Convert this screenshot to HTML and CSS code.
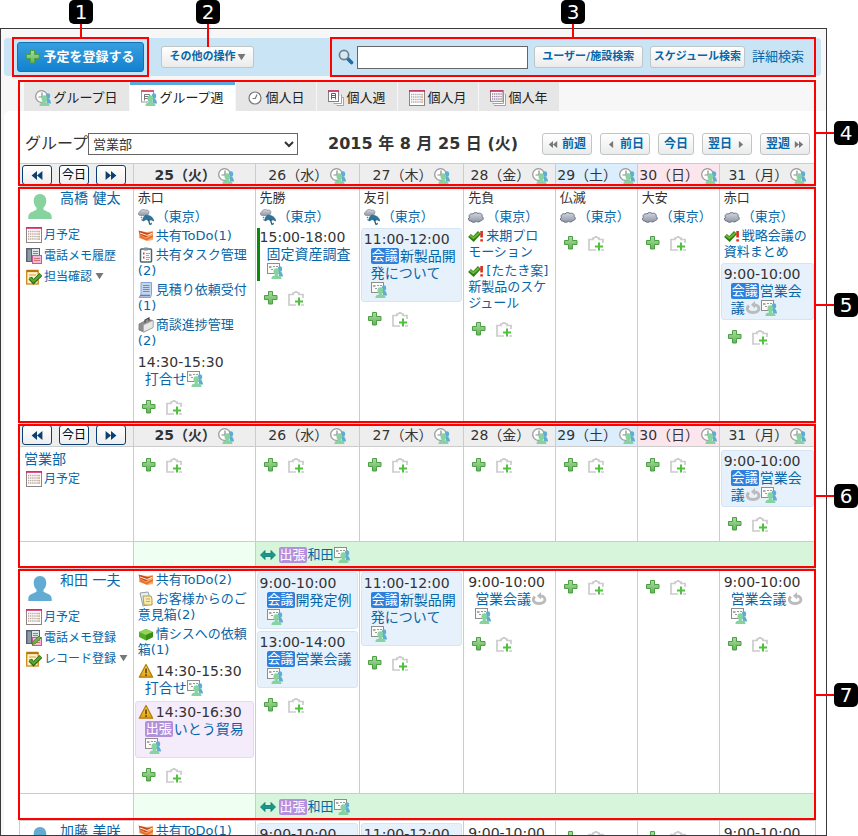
FILE: index.html
```html
<!DOCTYPE html>
<html lang="ja">
<head>
<meta charset="utf-8">
<title>スケジュール</title>
<link rel="stylesheet" href="styles.css">
</head>
<body>
<svg class="sprite" aria-hidden="true">
  <defs>
    <linearGradient id="gp" x1="0" y1="0" x2="0" y2="1"><stop offset="0" stop-color="#a9dc9f"/><stop offset="1" stop-color="#63b558"/></linearGradient>
    <linearGradient id="gc" x1="0" y1="0" x2="0" y2="1"><stop offset="0" stop-color="#d3d7e0"/><stop offset="1" stop-color="#8e95a5"/></linearGradient>
    <linearGradient id="gw" x1="0" y1="0" x2="0" y2="1"><stop offset="0" stop-color="#ffdf5a"/><stop offset="1" stop-color="#e0a010"/></linearGradient>
    <symbol id="people" viewBox="0 0 16 16"><ellipse cx="13" cy="6" rx="2.200" ry="2.800" fill="#5fadd3"/><path d="M11.500 8.500h2.800c.2 1.800 1.700 2 1.700 5h-4z" fill="#5fadd3"/><ellipse cx="9.300" cy="8.500" rx="2.800" ry="3.200" fill="#86d3a0"/><path d="M7.800 10.500h3v2c1.800.4 3.700.5 3.700 3.500H4.500c0-3 1.700-3.100 3.300-3.500z" fill="#86d3a0"/></symbol>
    <symbol id="clockppl" viewBox="0 0 16 16"><circle cx="6.500" cy="6.500" r="5.800" fill="#fff" stroke="#999" stroke-width="1.300"/><path d="M7 2.500v4.500H3.500" fill="none" stroke="#888" stroke-width="1.200"/><use href="#people"/></symbol>
    <symbol id="memoppl" viewBox="0 0 16 16"><rect x=".5" y=".5" width="12" height="10" fill="#fbfbf7" stroke="#8d8d8d"/><path d="M2 3h2.500v2H2z" fill="#aaa"/><path d="M6 3.500h2M9 3.500h2M4 6.500h2" stroke="#999"/><use href="#people"/></symbol>
    <symbol id="calppl" viewBox="0 0 16 16"><rect x=".5" y="1" width="12" height="11" fill="#fff" stroke="#999"/><path d="M0 1h13" stroke="#e0566c" stroke-width="2"/><path d="M3.500 10.500V4.500h5v5.500M3.500 6.500h5M3.500 8.500h5" fill="none" stroke="#777"/><use href="#people"/></symbol>
    <symbol id="clock" viewBox="0 0 16 16"><circle cx="8" cy="8" r="6" fill="#fff" stroke="#777" stroke-width="1.200"/><path d="M10 4.500L8.300 8.500H5.500" fill="none" stroke="#777" stroke-width="1.200"/></symbol>
    <symbol id="weeks" viewBox="0 0 16 16"><path d="M8.500 15.500h7V7.500H13M5.500 13.500h8V4.500" fill="#fff" stroke="#aaa099"/><rect x=".5" y="1" width="10" height="10.500" fill="#fff" stroke="#8a7d7d"/><path d="M0 1h11" stroke="#d81b60" stroke-width="1.500"/><path d="M3.500 9.500V3.500h4v6M3.500 5.500h4M3.500 7.500h4" fill="none" stroke="#6d5c66"/></symbol>
    <symbol id="cal" viewBox="0 0 16 16"><rect x=".5" y=".5" width="15" height="15" fill="#fff" stroke="#8d8583"/><path d="M0 1h16" stroke="#d81b60" stroke-width="1.500"/><path d="M2 4.500h12M2 7h12M2 9.500h12M2 12h12" stroke="#b5a49d" stroke-width="1.400" stroke-dasharray="1.300 .8"/><path d="M13 4v9" stroke="#ea9a70" stroke-dasharray="1.400 1.200"/></symbol>
    <symbol id="years" viewBox="0 0 16 16"><path d="M4 15.500h11.500V4M2.500 13.500h11V2" fill="#fff" stroke="#aaa099"/><rect x=".5" y=".8" width="12.500" height="10.500" fill="#fff" stroke="#8d8583"/><path d="M0 1h13.500" stroke="#d81b60" stroke-width="1.500"/><path d="M2 4h10M2 6.500h10M2 9h10" stroke="#98809c" stroke-width="1.400" stroke-dasharray="1.300 .8"/></symbol>
    <symbol id="plus" viewBox="0 0 14 14"><path d="M4.500 .5h4v4h4.500v4H8.500v4.500h-4V8.500H.5v-4h4z" fill="url(#gp)" stroke="#4c9f45"/></symbol>
    <symbol id="clip" viewBox="0 0 16 16"><path d="M8 14H1V3.500H5V2h1l2-1.500L10 2h1v1.500h4V7M13 14h3" fill="none" stroke="#ccc" stroke-width="1.700"/><path d="M11 6.500v8M7 10.500h8" stroke="#4fc13c" stroke-width="2"/></symbol>
    <symbol id="user" viewBox="0 0 24 27"><path d="M12 1c4 0 6.300 2.900 6.300 7 0 3-1.300 5.300-2.800 6.500v2.200c2 1.600 8.200 2.200 8.200 7V26H.3v-2.300c0-4.800 6.200-5.400 8.200-7v-2.200C7 13.300 5.700 11 5.700 8c0-4.100 2.300-7 6.300-7z" fill="currentColor"/></symbol>
    <symbol id="phone" viewBox="0 0 16 16"><rect x=".5" y=".5" width="13" height="13" fill="#dfe4e8" stroke="#59656e"/><path d="M1 1h4.500v12.500H1z" fill="#8e9ba5" stroke="#59656e"/><path d="M7 3.500h5M7 5.500h5" stroke="#7d8a94"/><rect x="6.500" y="7.500" width="9" height="8" fill="#f6b8da" stroke="#c05e92"/><path d="M8 10.500h6M8 12.500h6" stroke="#c77"/></symbol>
    <symbol id="phoneedit" viewBox="0 0 16 16"><use href="#phone"/><path d="M6 14.500l1-3L13 6l2 2-6 5.700z" fill="#75b640" stroke="#3d7b24" stroke-width=".8"/></symbol>
    <symbol id="record" viewBox="0 0 16 16"><rect x=".7" y="1.500" width="11.500" height="13.500" fill="#fff2c4" stroke="#c98a1b" stroke-width="1.300"/><path d="M1 2h11" stroke="#b77513" stroke-width="2.200"/><path d="M3 6h7M3 8.500h4M3 11h3" stroke="#c9a05a"/><path d="M4 9l3.500 3.800L15 5.500" fill="none" stroke="#2c6a18" stroke-width="4"/><path d="M4.200 9.300l3.300 3L14.700 5.800" fill="none" stroke="#58ac28" stroke-width="2.200"/></symbol>
    <symbol id="rain" viewBox="0 0 16 16"><path d="M2.500 6.500C-.3 6.500-.3 3.300 1.800 3 2.500.3 6 0 7.200 1.200c2.300-.9 4.300.8 3.600 2.800-.5 2-2 2.500-3 2.500z" fill="url(#gc)" stroke="#858d9b" stroke-width=".8"/><path d="M3 8l1 1M3.500 10.500l1.200 1" stroke="#5b8194" stroke-width="1.200"/><path d="M5 12C4.500 7 8 5.500 10.500 6.500c3 .7 5 3 5.300 5.500l-2.800-1.200-2.500.9-2.200-1.200z" fill="#2d759b" stroke="#1b5878" stroke-width=".6"/><path d="M10.500 10.500l1 4c.4 1.300 2 .9 1.700-.6" fill="none" stroke="#1b5878" stroke-width="1.200"/></symbol>
    <symbol id="cloud" viewBox="0 0 16 16"><path d="M3 12C.5 12.500-.5 9 1.500 8.500 0 6 3 4 5 5c1-2 4-1.600 5-.5 2-1 5 .5 4 3 2 .8 1.500 4-1 4-1 1.500-3.500 2-4.500.8C6.500 13.800 4 13.500 3 12z" fill="url(#gc)" stroke="#676e7c"/></symbol>
    <symbol id="todo" viewBox="0 0 16 16"><path d="M1 3l8 1 6-1v9l-6 1-8-3z" fill="#f8ab6b"/><path d="M.5 2.500l9 2.500 5.500-1-5 4-2 1.500-6-3z" fill="#c9481c"/><path d="M2 7l6 3.500L15 7v2l-6.500 3.500L2 9.500z" fill="#e8702c"/><path d="M2 5l7 2.500 5-2.200" fill="none" stroke="#fff0d8"/></symbol>
    <symbol id="task" viewBox="0 0 16 16"><rect x="2.500" y="2" width="11" height="13" rx="1" fill="#fff" stroke="#4d646c" stroke-width="1.500"/><rect x="5.500" y=".5" width="5" height="3" rx="1" fill="#82949b"/><path d="M5 6.500h1.500M5 10.500h1.500" stroke="#d34" stroke-width="1.800"/><path d="M8 6.500h4M8 8.500h3M8 10.500h4M8 12.500h3" stroke="#9ab"/></symbol>
    <symbol id="sheet" viewBox="0 0 16 16"><path d="M3 .5h10.500v12l-1 3H1l2-3z" fill="#c3d5ef" stroke="#88a3cc"/><path d="M5 3.500h6.500M5 5.500h6.500M5 7.500h6.500M5 9.500h6.500" stroke="#6d8dc0"/><path d="M2 13.500h10" stroke="#5d7fb5" stroke-width="1.500"/></symbol>
    <symbol id="case" viewBox="0 0 16 16"><path d="M1 7l9-4.500 5 1v7L6 15l-5-2z" fill="#8f8f8f" stroke="#777" stroke-width=".8"/><path d="M5.500 8L15 3.500v7L5.500 15z" fill="#e8e8e8" stroke="#a5a5a5" stroke-width=".6"/><path d="M7 5.500V3L11 1v2.500" fill="none" stroke="#444" stroke-width="1.200"/></symbol>
    <symbol id="chk" viewBox="0 0 16 16"><path d="M1.500 7.500L5.500 11l6-6.500" fill="none" stroke="#2f7d16" stroke-width="4.200"/><path d="M2 7.500L5.500 10l5.500-5" fill="none" stroke="#68ba35" stroke-width="2"/><path d="M13.600 3v6.500M13.600 11.200v2.300" stroke="#dd2c1c" stroke-width="2.600"/></symbol>
    <symbol id="warn" viewBox="0 0 16 16"><path d="M8 1.500l6.700 12.700H1.300z" fill="url(#gw)" stroke="#b57b0c" stroke-width="1.300" stroke-linejoin="round"/><path d="M8 5.500v4.700M8 11.300v1.700" stroke="#5b420a" stroke-width="1.600"/></symbol>
    <symbol id="note" viewBox="0 0 16 16"><path d="M2 2l8-1 4 12-9 2z" fill="#e6eef0" stroke="#8da1a6"/><path d="M5 5h8l1 3v6H6z" fill="#f8e9ac" stroke="#b99b4e"/><path d="M8 8h4M8 10.500h4" stroke="#c9a961"/></symbol>
    <symbol id="box" viewBox="0 0 16 16"><path d="M1 6l7-3 7 3v5l-7 3.500L1 11z" fill="#52ae24"/><path d="M1 6l7-3 7 3-7 3z" fill="#91d456"/><path d="M8 9l7-3v5l-7 3.500z" fill="#388e18"/></symbol>
    <symbol id="rep" viewBox="0 0 16 16"><path d="M3.800 5.500C.8 9 2.800 12.500 8 12.500s7-3 5.200-6C12.500 5.500 11.500 5 9.500 5" fill="none" stroke="#bbb" stroke-width="2.800"/><path d="M10 1v7.500L6 4.800z" fill="#bbb"/></symbol>
    <symbol id="span" viewBox="0 0 16 16"><path d="M.5 8L5 3.500V6.500h6v-3L15.500 8 11 12.500v-3H5v3z" fill="#18988a" stroke="#0d776e" stroke-width=".8"/></symbol>
    <symbol id="mag" viewBox="0 0 16 16"><path d="M9.500 9.500l4 4" stroke="#1f6fa5" stroke-width="3.600" stroke-linecap="round"/><circle cx="6" cy="6" r="4.600" fill="#d4e9f2" stroke="#6f7f8c" stroke-width="1.700"/></symbol>
    <symbol id="dl" viewBox="0 0 12 10"><path d="M6 0v10L0 5zM12 0v10L6 5z" fill="currentColor"/></symbol>
    <symbol id="dr" viewBox="0 0 12 10"><path d="M0 0v10l6-5zM6 0v10l6-5z" fill="currentColor"/></symbol>
    <symbol id="sl" viewBox="0 0 12 10"><path d="M9 0v10L3 5z" fill="currentColor"/></symbol>
    <symbol id="sr" viewBox="0 0 12 10"><path d="M3 0v10l6-5z" fill="currentColor"/></symbol>
    <symbol id="down" viewBox="0 0 10 8"><path d="M.5 0h9L5 7z" fill="#777"/></symbol>
  </defs>
</svg>

<main class="frame">
  <div class="toolbar">
    <button class="primary"><svg class="i14"><use href="#plus"/></svg>予定を登録する</button>
    <button class="btn more">その他の操作<svg class="down"><use href="#down"/></svg></button>
    <form class="search">
      <svg class="i16"><use href="#mag"/></svg>
      <input type="text" aria-label="検索">
      <button type="button" class="btn">ユーザー/施設検索</button>
      <button type="button" class="btn">スケジュール検索</button>
      <a href="#">詳細検索</a>
    </form>
  </div>

  <nav class="tabs">
    <a class="tab wide" href="#"><svg class="i16"><use href="#clockppl"/></svg>グループ日</a>
    <a class="tab wide active" href="#"><svg class="i16"><use href="#calppl"/></svg>グループ週</a>
    <a class="tab" href="#"><svg class="i16"><use href="#clock"/></svg>個人日</a>
    <a class="tab" href="#"><svg class="i16"><use href="#weeks"/></svg>個人週</a>
    <a class="tab" href="#"><svg class="i16"><use href="#cal"/></svg>個人月</a>
    <a class="tab" href="#"><svg class="i16"><use href="#years"/></svg>個人年</a>
  </nav>

  <section class="panel">
    <div class="period">
      <label for="group">グループ</label>
      <select id="group"><option>営業部</option></select>
      <h1>2015 年 8 月 25 日 (火)</h1>
      <div class="steps">
        <button class="btn"><svg class="ar"><use href="#dl"/></svg>前週</button>
        <button class="btn"><svg class="ar"><use href="#sl"/></svg>前日</button>
        <button class="btn">今日</button>
        <button class="btn">翌日<svg class="ar"><use href="#sr"/></svg></button>
        <button class="btn">翌週<svg class="ar"><use href="#dr"/></svg></button>
      </div>
    </div>

    <table class="week">
      <colgroup><col class="c-user"><col class="c-today"><col class="c-day"><col class="c-day"><col class="c-fri"><col class="c-end"><col class="c-end"><col class="c-mon"></colgroup>
      <tbody>
        <tr class="head">
          <th><div class="jump"><button aria-label="前週"><svg class="jar"><use href="#dl"/></svg></button><button>今日</button><button aria-label="翌週"><svg class="jar"><use href="#dr"/></svg></button></div></th>
          <th class="today">25（火）<svg class="i16"><use href="#clockppl"/></svg></th>
          <th>26（水）<svg class="i16"><use href="#clockppl"/></svg></th>
          <th>27（木）<svg class="i16"><use href="#clockppl"/></svg></th>
          <th>28（金）<svg class="i16"><use href="#clockppl"/></svg></th>
          <th class="sat">29（土）<svg class="i16"><use href="#clockppl"/></svg></th>
          <th class="sun">30（日）<svg class="i16"><use href="#clockppl"/></svg></th>
          <th>31（月）<svg class="i16"><use href="#clockppl"/></svg></th>
        </tr>
        <tr class="first">
          <td>
            <div class="who"><svg class="avatar green"><use href="#user"/></svg><a href="#">高橋 健太</a></div>
            <ul class="links">
              <li><svg class="i16"><use href="#cal"/></svg><a href="#">月予定</a></li>
              <li><svg class="i16"><use href="#phone"/></svg><a href="#">電話メモ履歴</a></li>
              <li><svg class="i16"><use href="#record"/></svg><a href="#">担当確認</a><svg class="down"><use href="#down"/></svg></li>
            </ul>
          </td>
          <td>
            <div class="luck">赤口</div>
            <div class="weather"><svg class="i16"><use href="#rain"/></svg><a href="#">（東京）</a></div>
            <div class="item"><svg class="i16"><use href="#todo"/></svg><a href="#">共有ToDo(1)</a></div>
            <div class="item"><svg class="i16"><use href="#task"/></svg><a href="#">共有タスク管理<br>(2)</a></div>
            <div class="item"><svg class="i16"><use href="#sheet"/></svg><a href="#">見積り依頼受付<br>(1)</a></div>
            <div class="item"><svg class="i16"><use href="#case"/></svg><a href="#">商談進捗管理<br>(2)</a></div>
            <div class="event"><time>14:30-15:30</time><div class="title"><a href="#">打合せ</a><svg class="i16"><use href="#memoppl"/></svg></div></div>
            <div class="add"><a href="#" aria-label="登録"><svg class="i14"><use href="#plus"/></svg></a><a href="#" aria-label="貼り付け"><svg class="i16"><use href="#clip"/></svg></a></div>
          </td>
          <td>
            <div class="luck">先勝</div>
            <div class="weather"><svg class="i16"><use href="#rain"/></svg><a href="#">（東京）</a></div>
            <div class="event mark"><time>15:00-18:00</time><div class="title"><a href="#">固定資産調査</a><br><svg class="i16"><use href="#memoppl"/></svg></div></div>
            <div class="add"><a href="#" aria-label="登録"><svg class="i14"><use href="#plus"/></svg></a><a href="#" aria-label="貼り付け"><svg class="i16"><use href="#clip"/></svg></a></div>
          </td>
          <td>
            <div class="luck">友引</div>
            <div class="weather"><svg class="i16"><use href="#rain"/></svg><a href="#">（東京）</a></div>
            <div class="event meet"><time>11:00-12:00</time><div class="title"><span class="tag">会議</span><a href="#">新製品開<br>発について</a><br><svg class="i16"><use href="#memoppl"/></svg></div></div>
            <div class="add"><a href="#" aria-label="登録"><svg class="i14"><use href="#plus"/></svg></a><a href="#" aria-label="貼り付け"><svg class="i16"><use href="#clip"/></svg></a></div>
          </td>
          <td>
            <div class="luck">先負</div>
            <div class="weather"><svg class="i16"><use href="#cloud"/></svg><a href="#">（東京）</a></div>
            <div class="item"><svg class="i16"><use href="#chk"/></svg><a href="#">来期プロ<br>モーション</a></div>
            <div class="item"><svg class="i16"><use href="#chk"/></svg><a href="#">[たたき案]<br>新製品のスケ<br>ジュール</a></div>
            <div class="add"><a href="#" aria-label="登録"><svg class="i14"><use href="#plus"/></svg></a><a href="#" aria-label="貼り付け"><svg class="i16"><use href="#clip"/></svg></a></div>
          </td>
          <td>
            <div class="luck">仏滅</div>
            <div class="weather"><svg class="i16"><use href="#cloud"/></svg><a href="#">（東京）</a></div>
            <div class="add"><a href="#" aria-label="登録"><svg class="i14"><use href="#plus"/></svg></a><a href="#" aria-label="貼り付け"><svg class="i16"><use href="#clip"/></svg></a></div>
          </td>
          <td>
            <div class="luck">大安</div>
            <div class="weather"><svg class="i16"><use href="#cloud"/></svg><a href="#">（東京）</a></div>
            <div class="add"><a href="#" aria-label="登録"><svg class="i14"><use href="#plus"/></svg></a><a href="#" aria-label="貼り付け"><svg class="i16"><use href="#clip"/></svg></a></div>
          </td>
          <td>
            <div class="luck">赤口</div>
            <div class="weather"><svg class="i16"><use href="#cloud"/></svg><a href="#">（東京）</a></div>
            <div class="item"><svg class="i16"><use href="#chk"/></svg><a href="#">戦略会議の<br>資料まとめ</a></div>
            <div class="event meet"><time>9:00-10:00</time><div class="title"><span class="tag">会議</span><a href="#">営業会<br>議</a><svg class="i16"><use href="#rep"/></svg><svg class="i16"><use href="#memoppl"/></svg></div></div>
            <div class="add"><a href="#" aria-label="登録"><svg class="i14"><use href="#plus"/></svg></a><a href="#" aria-label="貼り付け"><svg class="i16"><use href="#clip"/></svg></a></div>
          </td>
        </tr>
      </tbody>
      <tbody>
        <tr class="head">
          <th><div class="jump"><button aria-label="前週"><svg class="jar"><use href="#dl"/></svg></button><button>今日</button><button aria-label="翌週"><svg class="jar"><use href="#dr"/></svg></button></div></th>
          <th class="today">25（火）<svg class="i16"><use href="#clockppl"/></svg></th>
          <th>26（水）<svg class="i16"><use href="#clockppl"/></svg></th>
          <th>27（木）<svg class="i16"><use href="#clockppl"/></svg></th>
          <th>28（金）<svg class="i16"><use href="#clockppl"/></svg></th>
          <th class="sat">29（土）<svg class="i16"><use href="#clockppl"/></svg></th>
          <th class="sun">30（日）<svg class="i16"><use href="#clockppl"/></svg></th>
          <th>31（月）<svg class="i16"><use href="#clockppl"/></svg></th>
        </tr>
        <tr class="dept">
          <td>
            <a class="deptname" href="#">営業部</a>
            <ul class="links"><li><svg class="i16"><use href="#cal"/></svg><a href="#">月予定</a></li></ul>
          </td>
          <td><div class="add"><a href="#" aria-label="登録"><svg class="i14"><use href="#plus"/></svg></a><a href="#" aria-label="貼り付け"><svg class="i16"><use href="#clip"/></svg></a></div></td>
          <td><div class="add"><a href="#" aria-label="登録"><svg class="i14"><use href="#plus"/></svg></a><a href="#" aria-label="貼り付け"><svg class="i16"><use href="#clip"/></svg></a></div></td>
          <td><div class="add"><a href="#" aria-label="登録"><svg class="i14"><use href="#plus"/></svg></a><a href="#" aria-label="貼り付け"><svg class="i16"><use href="#clip"/></svg></a></div></td>
          <td><div class="add"><a href="#" aria-label="登録"><svg class="i14"><use href="#plus"/></svg></a><a href="#" aria-label="貼り付け"><svg class="i16"><use href="#clip"/></svg></a></div></td>
          <td><div class="add"><a href="#" aria-label="登録"><svg class="i14"><use href="#plus"/></svg></a><a href="#" aria-label="貼り付け"><svg class="i16"><use href="#clip"/></svg></a></div></td>
          <td><div class="add"><a href="#" aria-label="登録"><svg class="i14"><use href="#plus"/></svg></a><a href="#" aria-label="貼り付け"><svg class="i16"><use href="#clip"/></svg></a></div></td>
          <td>
            <div class="event meet"><time>9:00-10:00</time><div class="title"><span class="tag">会議</span><a href="#">営業会<br>議</a><svg class="i16"><use href="#rep"/></svg><svg class="i16"><use href="#memoppl"/></svg></div></div>
            <div class="add"><a href="#" aria-label="登録"><svg class="i14"><use href="#plus"/></svg></a><a href="#" aria-label="貼り付け"><svg class="i16"><use href="#clip"/></svg></a></div>
          </td>
        </tr>
        <tr class="banner">
          <td></td><td class="pale"></td>
          <td class="trip" colspan="6"><div class="tripline"><svg class="i16"><use href="#span"/></svg><span class="tag out">出張</span><a href="#">和田</a><svg class="i16"><use href="#memoppl"/></svg></div></td>
        </tr>
      </tbody>
      <tbody>
        <tr class="second">
          <td>
            <div class="who"><svg class="avatar blue"><use href="#user"/></svg><a href="#">和田 一夫</a></div>
            <ul class="links">
              <li><svg class="i16"><use href="#cal"/></svg><a href="#">月予定</a></li>
              <li><svg class="i16"><use href="#phoneedit"/></svg><a href="#">電話メモ登録</a></li>
              <li><svg class="i16"><use href="#record"/></svg><a href="#">レコード登録</a><svg class="down"><use href="#down"/></svg></li>
            </ul>
          </td>
          <td>
            <div class="item"><svg class="i16"><use href="#todo"/></svg><a href="#">共有ToDo(2)</a></div>
            <div class="item"><svg class="i16"><use href="#note"/></svg><a href="#">お客様からのご<br>意見箱(2)</a></div>
            <div class="item"><svg class="i16"><use href="#box"/></svg><a href="#">情シスへの依頼<br>箱(1)</a></div>
            <div class="event"><svg class="i16"><use href="#warn"/></svg><time>14:30-15:30</time><div class="title"><a href="#">打合せ</a><svg class="i16"><use href="#memoppl"/></svg></div></div>
            <div class="event away"><svg class="i16"><use href="#warn"/></svg><time>14:30-16:30</time><div class="title"><span class="tag out">出張</span><a href="#">いとう貿易</a><br><svg class="i16"><use href="#memoppl"/></svg></div></div>
            <div class="add"><a href="#" aria-label="登録"><svg class="i14"><use href="#plus"/></svg></a><a href="#" aria-label="貼り付け"><svg class="i16"><use href="#clip"/></svg></a></div>
          </td>
          <td>
            <div class="event meet"><time>9:00-10:00</time><div class="title"><span class="tag">会議</span><a href="#">開発定例</a><br><svg class="i16"><use href="#memoppl"/></svg></div></div>
            <div class="event meet"><time>13:00-14:00</time><div class="title"><span class="tag">会議</span><a href="#">営業会議</a><br><svg class="i16"><use href="#memoppl"/></svg></div></div>
            <div class="add"><a href="#" aria-label="登録"><svg class="i14"><use href="#plus"/></svg></a><a href="#" aria-label="貼り付け"><svg class="i16"><use href="#clip"/></svg></a></div>
          </td>
          <td>
            <div class="event meet"><time>11:00-12:00</time><div class="title"><span class="tag">会議</span><a href="#">新製品開<br>発について</a><br><svg class="i16"><use href="#memoppl"/></svg></div></div>
            <div class="add"><a href="#" aria-label="登録"><svg class="i14"><use href="#plus"/></svg></a><a href="#" aria-label="貼り付け"><svg class="i16"><use href="#clip"/></svg></a></div>
          </td>
          <td>
            <div class="event"><time>9:00-10:00</time><div class="title"><a href="#">営業会議</a><svg class="i16"><use href="#rep"/></svg><br><svg class="i16"><use href="#memoppl"/></svg></div></div>
            <div class="add"><a href="#" aria-label="登録"><svg class="i14"><use href="#plus"/></svg></a><a href="#" aria-label="貼り付け"><svg class="i16"><use href="#clip"/></svg></a></div>
          </td>
          <td><div class="add"><a href="#" aria-label="登録"><svg class="i14"><use href="#plus"/></svg></a><a href="#" aria-label="貼り付け"><svg class="i16"><use href="#clip"/></svg></a></div></td>
          <td><div class="add"><a href="#" aria-label="登録"><svg class="i14"><use href="#plus"/></svg></a><a href="#" aria-label="貼り付け"><svg class="i16"><use href="#clip"/></svg></a></div></td>
          <td>
            <div class="event"><time>9:00-10:00</time><div class="title"><a href="#">営業会議</a><svg class="i16"><use href="#rep"/></svg><br><svg class="i16"><use href="#memoppl"/></svg></div></div>
            <div class="add"><a href="#" aria-label="登録"><svg class="i14"><use href="#plus"/></svg></a><a href="#" aria-label="貼り付け"><svg class="i16"><use href="#clip"/></svg></a></div>
          </td>
        </tr>
        <tr class="banner">
          <td></td><td class="pale"></td>
          <td class="trip" colspan="6"><div class="tripline"><svg class="i16"><use href="#span"/></svg><span class="tag out">出張</span><a href="#">和田</a><svg class="i16"><use href="#memoppl"/></svg></div></td>
        </tr>
        <tr class="third">
          <td><div class="who"><svg class="avatar blue"><use href="#user"/></svg><a href="#">加藤 美咲</a></div></td>
          <td><div class="item"><svg class="i16"><use href="#todo"/></svg><a href="#">共有ToDo(1)</a></div></td>
          <td><div class="event meet"><time>9:00-10:00</time></div></td>
          <td><div class="event meet"><time>11:00-12:00</time></div></td>
          <td><div class="event"><time>9:00-10:00</time></div></td>
          <td><div class="add"><a href="#" aria-label="登録"><svg class="i14"><use href="#plus"/></svg></a><a href="#" aria-label="貼り付け"><svg class="i16"><use href="#clip"/></svg></a></div></td>
          <td><div class="add"><a href="#" aria-label="登録"><svg class="i14"><use href="#plus"/></svg></a><a href="#" aria-label="貼り付け"><svg class="i16"><use href="#clip"/></svg></a></div></td>
          <td><div class="event"><time>9:00-10:00</time></div></td>
        </tr>
      </tbody>
    </table>
  </section>
</main>

<!-- numbered callouts laid over the screen -->
<div class="outline o1"></div><div class="wire v w1"></div><span class="num n1">1</span>
<div class="wire v w2"></div><span class="num n2">2</span>
<div class="outline o3"></div><div class="wire v w3"></div><span class="num n3">3</span>
<div class="outline o4"></div><div class="wire h w4"></div><span class="num n4">4</span>
<div class="outline o5"></div><div class="wire h w5"></div><span class="num n5">5</span>
<div class="outline o6"></div><div class="wire h w6"></div><span class="num n6">6</span>
<div class="outline o7"></div><div class="wire h w7"></div><span class="num n7">7</span>
</body>
</html>
```
FILE: styles.css
```css
* { box-sizing: border-box; }
body {
  position: relative;
  margin: 0;
  height: 100vh;
  padding: 28px 31px 0 0;
  overflow: hidden;
  background: #fff;
  color: #333;
  font: 13px/16px "DejaVu Sans", "Noto Sans CJK JP", sans-serif;
}
a { color: #0766a8; text-decoration: none; }
button, input, select { font: inherit; margin: 0; }
ul { list-style: none; margin: 0; padding: 0; }
svg { flex: none; vertical-align: top; }
.sprite { position: absolute; width: 0; height: 0; }
.i16 { width: 16px; height: 16px; }
.i14 { width: 14px; height: 14px; }
.down { width: 9px; height: 7px; margin-left: 1px; }

.frame {
  height: 100%;
  overflow: hidden;
  border: 1px solid #3c383c;
  background: #f7f7f7;
  padding: 9px 0 0 3px;
}

/* toolbar */
.toolbar {
  display: flex;
  align-items: center;
  height: 38px;
  margin-right: 5px;
  padding: 0 17px 0 13px;
  border-radius: 4px;
  background: #c9e4f5;
}
.primary {
  display: flex;
  align-items: center;
  justify-content: center;
  gap: 3px;
  width: 127px;
  height: 30px;
  padding: 0;
  border: 1px solid #1171b4;
  border-radius: 3px;
  background: linear-gradient(#389fe0, #1281cf);
  color: #fff;
  font-size: 13px;
  font-weight: bold;
}
.btn {
  display: flex;
  align-items: center;
  justify-content: center;
  height: 22px;
  padding: 0 3px;
  border: 1px solid #c0c6c8;
  border-radius: 3px;
  background: linear-gradient(#fff, #ebebeb);
  color: #0766a8;
  font-size: 12px;
  font-weight: bold;
  white-space: nowrap;
}
.more { width: 93px; margin-left: 17px; font-size: 11px; }
.search { display: flex; align-items: center; flex: 1; justify-content: flex-end; margin: 0; }
.search input { width: 171px; height: 23px; margin: 0 6px 0 3px; padding: 0 4px; border: 1px solid #666; background: #fff; }
.search .btn { margin-right: 7px; font-size: 11px; }
.search .btn:first-of-type { width: 109px; }

/* view tabs */
.tabs { display: flex; gap: 1px; margin: 6px 0 0 20px; }
.tab {
  display: flex;
  align-items: center;
  justify-content: center;
  gap: 2px;
  width: 80px;
  height: 29px;
  border-top: 2px solid #e6e6e6;
  background: #e6e6e6;
  color: #222;
}
.tab.wide { width: 105px; }
.tab.active { border-top: 3px solid #5aaadd; background: #fff; }

/* period row */
.panel { padding: 22px 10px 0 15px; border-radius: 6px 0 0 0; background: #fff; }
.period { display: flex; align-items: center; height: 22px; margin: 0 6px 8px; }
.period label { font-size: 16px; line-height: 22px; }
.period select { width: 210px; height: 22px; border: 1px solid #666; border-radius: 0; background: #fff; color: #333; font-size: 13px; padding: 0; }
.period h1 { margin: 0 0 0 30px; font-size: 16px; line-height: 22px; white-space: nowrap; }
.steps { display: flex; flex: 1; justify-content: flex-end; gap: 8px; }
.steps .btn { gap: 4px; padding: 0 5px; }
.ar { width: 10px; height: 7px; color: #777; }

/* week table */
.week { width: 100%; table-layout: fixed; border-spacing: 0; border: solid #ccc; border-width: 1px 0 0 1px; }
.c-user { width: 14.3%; }
.c-today { width: 15.3%; }
.c-day { width: 13.1%; }
.c-fri { width: 11.5%; }
.c-end { width: 10.3%; }
.c-mon { width: 12.1%; }
.week td, .week th { border: solid #ccc; border-width: 0 1px 1px 0; white-space: nowrap; }
.week th { height: 23px; padding: 0; background: #eee; font-size: 14px; line-height: 20px; font-weight: normal; }
.week th.today { font-weight: bold; }
.week th.sat { background: #dcedfc; }
.week th.sun { background: #fce6ed; }
.week th > svg { margin: 3px 0 0 2px; }
.week td { padding: 3px 1px; vertical-align: top; }
.week .third td { padding-top: 2px; }
.first { height: 237px; }
.dept { height: 95px; }
.second { height: 225px; }
.banner { height: 27px; }
.jump { display: flex; gap: 7px; padding-left: 2px; }
.jump button { display: flex; align-items: center; justify-content: center; width: 30px; height: 20px; padding: 0; border: 1px solid #0a3f74; border-radius: 3px; background: linear-gradient(#fff, #eee); color: #000; font-size: 12px; line-height: 16px; }
.jar { width: 12px; height: 9px; color: #0a3f74; }

.who { display: flex; height: 34px; padding-left: 7px; }
.who a { margin-left: 8px; font-size: 14px; }
.avatar { width: 24px; height: 27px; margin-top: 3px; }
.green { color: #86d3a0; }
.blue { color: #62abd2; }
.links { padding-left: 5px; font-size: 12px; }
.links li { display: flex; align-items: center; gap: 2px; height: 21px; }
.deptname { display: block; padding-left: 3px; font-size: 14px; line-height: 18px; }

.luck { padding-left: 3px; }
.weather { display: flex; align-items: center; gap: 2px; height: 22px; padding-left: 3px; }
.item { padding-left: 3px; margin-bottom: 3px; }
.item .i16 { margin-right: 2px; }
.event { margin-bottom: 2px; padding: 2px 3px; font-size: 14px; line-height: 17px; }
.event > .i16 { margin-right: 2px; }
.meet, .away { padding: 2px; border: 1px solid #d5e5f5; border-radius: 3px; background: #e6f1fc; }
.away { border-color: #e6daf3; background: #f4ebfb; }
.mark { padding: 1px 0; border-left: 3px solid #0a8a0a; }
.title { margin-left: 7px; }
.tag { display: inline-block; height: 16px; margin-right: 1px; padding: 0 1px; border-radius: 2px; background: #2d80dd; color: #fff; font-size: 13px; line-height: 16px; vertical-align: top; }
.tag.out { background: #b48fdb; }
.add { display: flex; align-items: center; gap: 10px; padding: 8px 0 0 7px; }
.pale { background: #effff1; }
.trip { background: #d7f5da; }
.tripline { display: flex; align-items: center; height: 19px; padding-left: 3px; }
.tripline .tag { margin-left: 3px; }

/* callouts */
.outline { position: absolute; left: 18px; right: 42px; border: 2px solid #f00; }
.wire { position: absolute; background: #f00; }
.v { top: 24px; width: 2px; height: 13px; }
.h { right: 24px; width: 18px; height: 2px; }
.num { position: absolute; top: 0; width: 24px; height: 24px; border-radius: 5px; background: #000; color: #fff; font-size: 20px; line-height: 24px; text-align: center; }
.o1 { left: 12px; right: auto; width: 137px; top: 37px; height: 40px; }
.w1 { left: 80px; } .n1 { left: 69px; }
.w2 { left: 207px; height: 23px; } .n2 { left: 196px; }
.o3 { left: auto; width: 486px; top: 37px; height: 40px; }
.w3 { right: 284px; } .n3 { right: 273px; }
.o4 { top: 80px; height: 106px; }
.w4 { top: 132px; } .n4 { top: 121px; right: 0; }
.o5 { top: 187px; height: 236px; }
.w5 { top: 304px; } .n5 { top: 293px; right: 0; }
.o6 { top: 424px; height: 144px; }
.w6 { top: 495px; } .n6 { top: 484px; right: 0; }
.o7 { top: 569px; height: 251px; }
.w7 { top: 694px; } .n7 { top: 683px; right: 0; }
```
